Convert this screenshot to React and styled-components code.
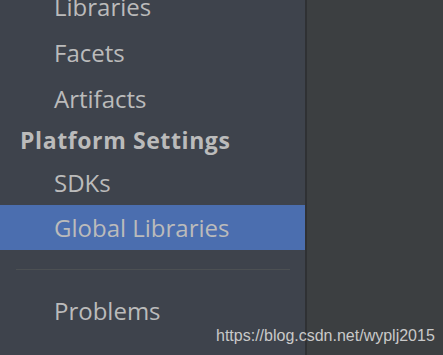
import React from "react";
import styled, { createGlobalStyle } from "styled-components";

const Global = createGlobalStyle`
  html, body { margin: 0; padding: 0; background: #3c3f41; }
  body { width: 443px; height: 355px; overflow: hidden; }
`;

const Page = styled.div`
  position: relative;
  display: flex;
  width: 443px;
  height: 355px;
  overflow: hidden;
  font-family: "Open Sans", "Noto Sans", sans-serif;
`;

const Sidebar = styled.div`
  width: 305px;
  flex: none;
  background: #3e434c;
  border-right: 2px solid #2f3134;
  overflow: hidden;
`;

const List = styled.div`
  display: flex;
  flex-direction: column;
  transform: translateY(-17px);
`;

const Item = styled.div`
  height: ${(p) => p.$h || 46}px;
  display: flex;
  align-items: center;
  padding-left: 54px;
  font-size: 24px;
  color: #bbbbbb;
  background: ${(p) => (p.$selected ? "#4b6eaf" : "transparent")};
  white-space: nowrap;
`;

const Header = styled.div`
  height: 38px;
  display: flex;
  align-items: center;
  padding-left: 20px;
  font-size: 23px;
  letter-spacing: 0.6px;
  font-weight: 700;
  color: #bbbbbb;
  white-space: nowrap;
`;

const Separator = styled.div`
  height: 1px;
  margin: 19px 15px 17px 16px;
  background: #4c5053;
`;

const Content = styled.div`
  flex: 1;
  background: #3c3f41;
`;

const Watermark = styled.div`
  position: absolute;
  left: 216px;
  top: 326px;
  font-family: "Liberation Sans", Arial, sans-serif;
  font-size: 16px;
  line-height: 19px;
  color: #c9c9c9;
  white-space: nowrap;
`;

export default function App() {
  return (
    <>
      <Global />
      <Page>
        <Sidebar>
          <List>
            <Item>Libraries</Item>
            <Item>Facets</Item>
            <Item>Artifacts</Item>
            <Header>Platform Settings</Header>
            <Item>SDKs</Item>
            <Item $selected $h={45}>Global Libraries</Item>
            <Separator />
            <Item>Problems</Item>
          </List>
        </Sidebar>
        <Content />
        <Watermark>https://blog.csdn.net/wyplj2015</Watermark>
      </Page>
    </>
  );
}
